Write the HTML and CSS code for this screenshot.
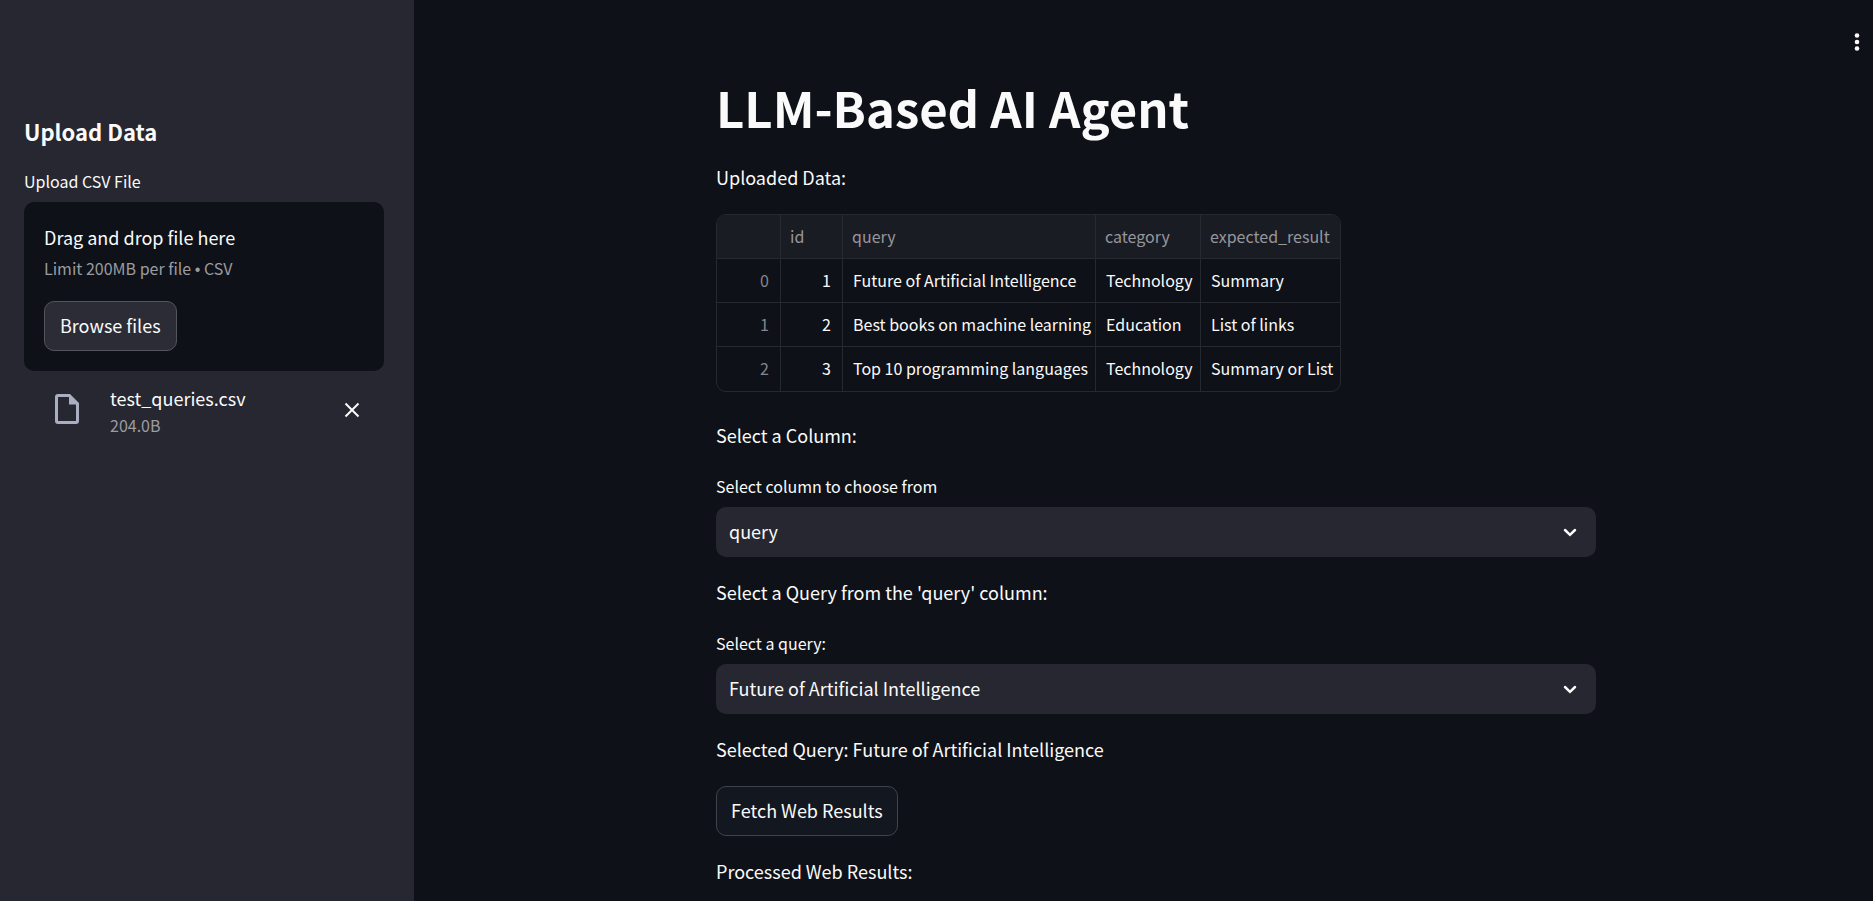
FILE: index.html
```html
<!DOCTYPE html>
<html lang="en">
<head>
<meta charset="utf-8">
<meta name="viewport" content="width=device-width, initial-scale=1">
<title>LLM-Based AI Agent</title>
<link rel="stylesheet" href="styles.css">
</head>
<body>
<div class="app">
  <aside class="sidebar">
    <h2 class="sidebar-title">Upload Data</h2>
    <label class="label" for="browse">Upload CSV File</label>
    <section class="dropzone">
      <div class="dropzone-title">Drag and drop file here</div>
      <div class="muted">Limit 200MB per file <span class="bullet">•</span> CSV</div>
      <button class="button button-raised" id="browse" type="button">Browse files</button>
    </section>
    <div class="file">
      <svg class="file-icon" viewBox="0 0 24 30" aria-hidden="true"><path fill-rule="evenodd" d="M3 0H15L24 9V27Q24 30 21 30H3Q0 30 0 27V3Q0 0 3 0ZM3 3V27H21V10.500H14V3Z"/></svg>
      <div class="file-info">
        <div class="file-name">test_queries.csv</div>
        <div class="muted">204.0B</div>
      </div>
      <button class="icon-button remove" type="button" aria-label="Remove file">
        <svg class="close-icon" viewBox="0 0 16 16" aria-hidden="true"><path d="M1.500 1.500L14.500 14.500M14.500 1.500L1.500 14.500"/></svg>
      </button>
    </div>
  </aside>
  <main class="main">
    <button class="icon-button menu" type="button" aria-label="Main menu">
      <svg class="menu-icon" viewBox="0 0 6 20" aria-hidden="true"><circle cx="3" cy="3.500" r="2.300"/><circle cx="3" cy="10" r="2.300"/><circle cx="3" cy="16.500" r="2.300"/></svg>
    </button>
    <div class="content">
      <h1 class="title">LLM-Based AI Agent</h1>
      <p class="text">Uploaded Data:</p>
      <div class="table-frame">
        <table class="table">
          <colgroup><col class="col-index"><col class="col-id"><col class="col-query"><col class="col-category"><col class="col-result"></colgroup>
          <thead>
            <tr><th></th><th>id</th><th>query</th><th>category</th><th>expected_result</th></tr>
          </thead>
          <tbody>
            <tr><td class="index">0</td><td class="number">1</td><td>Future of Artificial Intelligence</td><td>Technology</td><td>Summary</td></tr>
            <tr><td class="index">1</td><td class="number">2</td><td>Best books on machine learning</td><td>Education</td><td>List of links</td></tr>
            <tr><td class="index">2</td><td class="number">3</td><td>Top 10 programming languages</td><td>Technology</td><td>Summary or List</td></tr>
          </tbody>
        </table>
      </div>
      <p class="text">Select a Column:</p>
      <div class="field">
        <label class="label" for="column">Select column to choose from</label>
        <div class="select-wrap">
          <select class="select" id="column"><option>query</option></select>
          <svg class="chevron" viewBox="0 0 14 9" aria-hidden="true"><path d="M2 2L7 6.800L12 2"/></svg>
        </div>
      </div>
      <p class="text">Select a Query from the 'query' column:</p>
      <div class="field">
        <label class="label" for="query">Select a query:</label>
        <div class="select-wrap">
          <select class="select" id="query"><option>Future of Artificial Intelligence</option></select>
          <svg class="chevron" viewBox="0 0 14 9" aria-hidden="true"><path d="M2 2L7 6.800L12 2"/></svg>
        </div>
      </div>
      <p class="text">Selected Query: Future of Artificial Intelligence</p>
      <button class="button" type="button">Fetch Web Results</button>
      <p class="text">Processed Web Results:</p>
    </div>
  </main>
</div>
</body>
</html>
```
FILE: styles.css
```css
* { box-sizing: border-box; }

body {
  margin: 0;
  background: #0e1117;
  color: #fafafa;
  font-family: "Source Sans Pro", "Noto Sans CJK SC", sans-serif;
  font-size: 18px;
  line-height: 30px;
}

button, select { font: inherit; color: inherit; }

.app { display: flex; min-height: 100vh; }

.sidebar {
  flex: 0 0 414px;
  padding: 117px 30px 24px 24px;
  background: #262730;
}

.sidebar-title {
  margin: 0 0 22px;
  font-size: 22px;
  font-weight: 600;
  line-height: 28px;
}

.label { display: block; margin-bottom: 7px; font-size: 16px; line-height: 28px; }

.dropzone {
  display: flex;
  flex-direction: column;
  align-items: flex-start;
  padding: 20px;
  border-radius: 10px;
  background: #0e1117;
}

.dropzone-title { line-height: 30px; }

.muted { color: #9b9ca0; font-size: 16px; line-height: 32px; }
.bullet { font-family: "Liberation Sans", sans-serif; line-height: 1; }

.button {
  height: 50px;
  padding: 0 14px 2px;
  border: 1px solid #41434a;
  border-radius: 10px;
  background: #131720;
}

.button-raised { margin-top: 17px; padding: 0 15px 2px; border-color: #53545c; background: #2b2c36; }

.file {
  display: flex;
  align-items: flex-start;
  padding: 14px 19px 0 31px;
}

.file-icon { width: 24px; height: 30px; margin-top: 9px; fill: #a9aec2; }

.file-info { flex: 1; margin-left: 31px; }
.file-name { line-height: 26px; }
.file-info .muted { line-height: 28px; }

.icon-button {
  display: flex;
  padding: 5px;
  border: 0;
  background: none;
}

.remove { margin-top: 12px; }
.close-icon { width: 16px; height: 16px; stroke: #fafafa; stroke-width: 2; }

.main {
  position: relative;
  flex: 1;
  min-width: 0;
  padding: 74px 25px 0 50px;
}

.menu { position: absolute; top: 27px; right: 8px; }
.menu-icon { width: 6px; height: 20px; fill: #fafafa; }

.content {
  display: flex;
  flex-direction: column;
  align-items: flex-start;
  gap: 20px;
  max-width: 880px;
  margin: 0 auto;
}

.title { margin: 0 0 2px; font-size: 49px; font-weight: 700; line-height: 66px; }

.text { margin: 0; padding-bottom: 2px; line-height: 30px; }

.table-frame {
  margin-bottom: 8px;
  overflow: hidden;
  border: 1px solid #262930;
  border-radius: 10px;
}

.table { border-collapse: separate; border-spacing: 0; table-layout: fixed; width: 623px; font-size: 16px; }
.col-index { width: 64px; }
.col-id { width: 62px; }
.col-query { width: 253px; }
.col-category { width: 105px; }

.table th, .table td {
  height: 44px;
  padding: 0 0 2px 9px;
  border-right: 1px solid #262930;
  border-bottom: 1px solid #262930;
  text-align: left;
  white-space: nowrap;
  font-weight: 400;
}

.table td { padding-left: 10px; }
.table th { background: #1a1c24; color: #96979c; }
.table th:last-child, .table td:last-child { border-right: 0; }
.table tbody tr:last-child td { border-bottom: 0; }
.table .index { padding-right: 11px; color: #85868b; text-align: right; }
.table .number { padding-right: 11px; text-align: right; }

.field { width: 100%; }

.select-wrap { position: relative; }

.select {
  display: block;
  width: 100%;
  height: 50px;
  padding: 0 45px 2px 13px;
  border: 0;
  border-radius: 10px;
  background: #262730;
  appearance: none;
}

.chevron {
  position: absolute;
  top: 21px;
  right: 19px;
  width: 14px;
  height: 9px;
  fill: none;
  stroke: #fafafa;
  stroke-width: 2.500;
  stroke-linecap: round;
  pointer-events: none;
}
```
